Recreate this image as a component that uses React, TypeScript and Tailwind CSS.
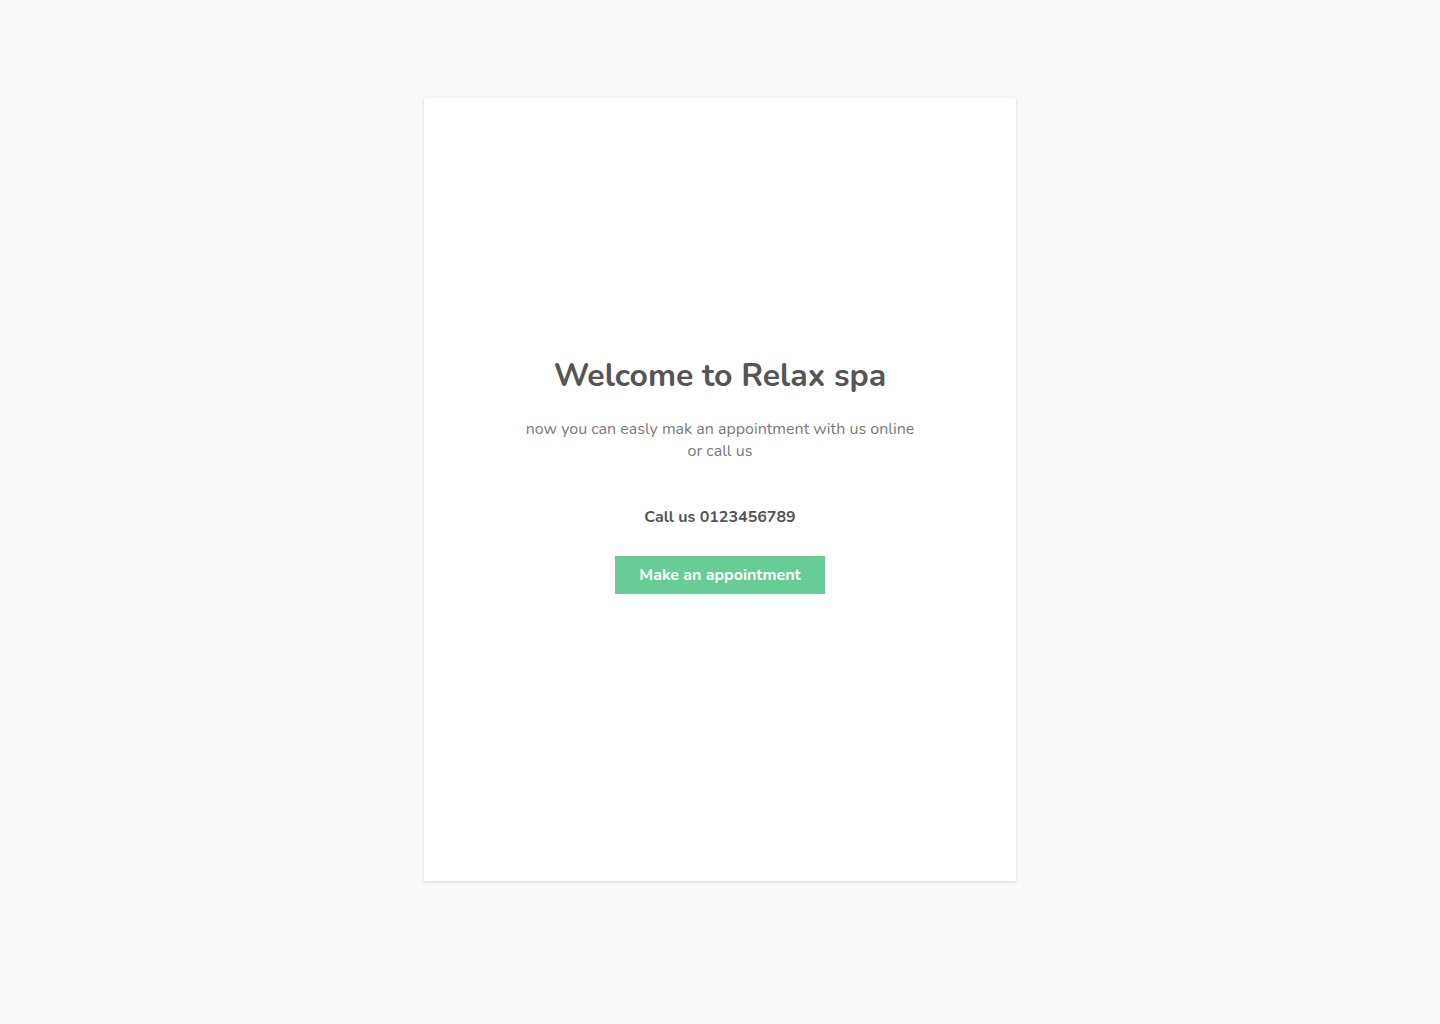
export default function App() {
  return (
    <div className="min-h-screen w-full bg-[#f9f9f9] pt-[98px]" style={{ fontFamily: '"Nunito", "Lato", "Noto Sans", sans-serif' }}>
      <div className="mx-auto flex h-[783px] w-[592px] flex-col items-center bg-white pt-[258px] shadow-[0_1px_3px_rgba(0,0,0,0.15)]">
        <h1 className="text-[32px] font-bold leading-[40px] text-[#555555]">Welcome to Relax spa</h1>
        <p className="mt-[22px] w-[400px] text-center text-[16px] leading-[22px] text-[#7a7a7a]">
          now you can easly mak an appointment with us online or call us
        </p>
        <p className="mt-[44px] text-[16px] font-bold leading-[22px] text-[#555555]">Call us 0123456789</p>
        <button className="mt-[28px] h-[38px] w-[210px] bg-[#68cc96] text-[16px] font-bold text-white">
          Make an appointment
        </button>
      </div>
    </div>
  );
}
